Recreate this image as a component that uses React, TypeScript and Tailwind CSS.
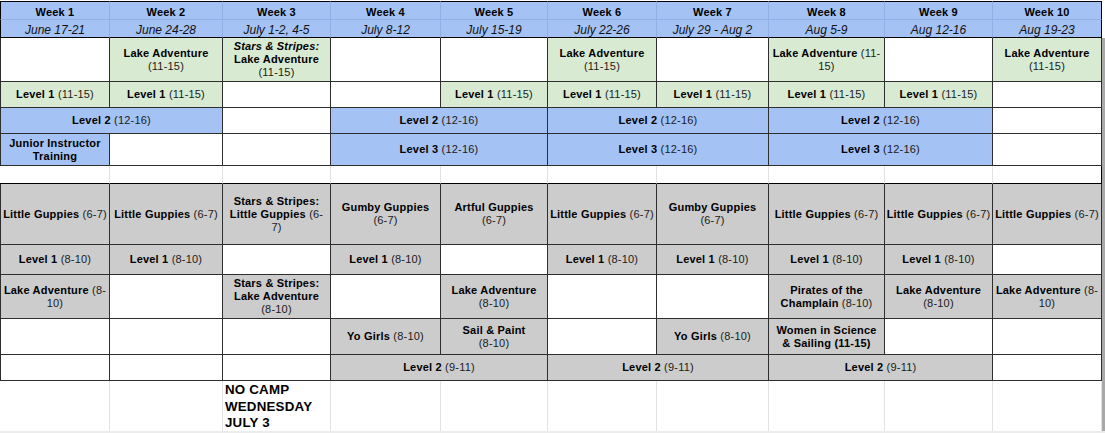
import type { ReactNode } from 'react'

// Summer sailing camp schedule, rendered like the shared Google Sheet.
type Bg = 'w' | 'g' | 'b' | 'k'
type Cell = { span?: 2; bg?: Bg; c?: ReactNode }
type Row = { h: string; kind: 'grid' | 'blank' | 'foot'; cells: Cell[] }

const BG: Record<Bg, string> = {
  w: 'bg-white',
  g: 'bg-[#d9ead3]',
  b: 'bg-[#a4c2f4]',
  k: 'bg-[#cccccc]'
}

const WEEKS = [
  ['Week 1', 'June 17-21'],
  ['Week 2', 'June 24-28'],
  ['Week 3', 'July 1-2, 4-5'],
  ['Week 4', 'July 8-12'],
  ['Week 5', 'July 15-19'],
  ['Week 6', 'July 22-26'],
  ['Week 7', 'July 29 - Aug 2'],
  ['Week 8', 'Aug 5-9'],
  ['Week 9', 'Aug 12-16'],
  ['Week 10', 'Aug 19-23']
]

function B({ children }: { children: ReactNode }): JSX.Element {
  return <span className="font-bold text-black">{children}</span>
}

const lake = (
  <>
    <B>Lake Adventure</B>
    <br />
    (11-15)
  </>
)
const lake8 = (
  <>
    <B>Lake Adventure</B>
    <br />
    (8-10)
  </>
)
const lakeSplit8 = (
  <>
    <B>Lake Adventure</B> (8-
    <br />
    10)
  </>
)
const l1 = (
  <>
    <B>Level 1</B> (11-15)
  </>
)
const l1y = (
  <>
    <B>Level 1</B> (8-10)
  </>
)
const l2 = (
  <>
    <B>Level 2</B> (12-16)
  </>
)
const l3 = (
  <>
    <B>Level 3</B> (12-16)
  </>
)
const l2y = (
  <>
    <B>Level 2</B> (9-11)
  </>
)
const guppies = (
  <>
    <B>Little Guppies</B> (6-7)
  </>
)
const gumby = (
  <>
    <B>Gumby Guppies</B>
    <br />
    (6-7)
  </>
)
const yo = (
  <>
    <B>Yo Girls</B> (8-10)
  </>
)

const blank10: Cell[] = Array.from({ length: 10 }, () => ({}))

const ROWS: Row[] = [
  {
    h: 'h-[44px]',
    kind: 'grid',
    cells: [
      {},
      { bg: 'g', c: lake },
      {
        bg: 'g',
        c: (
          <>
            <B>
              <i>Stars &amp; Stripes:</i>
            </B>
            <br />
            <B>Lake Adventure</B>
            <br />
            (11-15)
          </>
        )
      },
      {},
      {},
      { bg: 'g', c: lake },
      {},
      {
        bg: 'g',
        c: (
          <>
            <B>Lake Adventure</B> (11-
            <br />
            15)
          </>
        )
      },
      {},
      { bg: 'g', c: lake }
    ]
  },
  {
    h: 'h-[26px]',
    kind: 'grid',
    cells: [
      { bg: 'g', c: l1 },
      { bg: 'g', c: l1 },
      {},
      {},
      { bg: 'g', c: l1 },
      { bg: 'g', c: l1 },
      { bg: 'g', c: l1 },
      { bg: 'g', c: l1 },
      { bg: 'g', c: l1 },
      {}
    ]
  },
  {
    h: 'h-[26px]',
    kind: 'grid',
    cells: [
      { span: 2, bg: 'b', c: l2 },
      {},
      { span: 2, bg: 'b', c: l2 },
      { span: 2, bg: 'b', c: l2 },
      { span: 2, bg: 'b', c: l2 },
      {}
    ]
  },
  {
    h: 'h-[32px]',
    kind: 'grid',
    cells: [
      {
        bg: 'b',
        c: (
          <B>
            Junior Instructor
            <br />
            Training
          </B>
        )
      },
      {},
      {},
      { span: 2, bg: 'b', c: l3 },
      { span: 2, bg: 'b', c: l3 },
      { span: 2, bg: 'b', c: l3 },
      {}
    ]
  },
  { h: 'h-[18px]', kind: 'blank', cells: blank10 },
  {
    h: 'h-[61px]',
    kind: 'grid',
    cells: [
      { bg: 'k', c: guppies },
      { bg: 'k', c: guppies },
      {
        bg: 'k',
        c: (
          <>
            <B>Stars &amp; Stripes:</B>
            <br />
            <B>Little Guppies</B> (6-
            <br />
            7)
          </>
        )
      },
      { bg: 'k', c: gumby },
      {
        bg: 'k',
        c: (
          <>
            <B>Artful Guppies</B>
            <br />
            (6-7)
          </>
        )
      },
      { bg: 'k', c: guppies },
      { bg: 'k', c: gumby },
      { bg: 'k', c: guppies },
      { bg: 'k', c: guppies },
      { bg: 'k', c: guppies }
    ]
  },
  {
    h: 'h-[30px]',
    kind: 'grid',
    cells: [
      { bg: 'k', c: l1y },
      { bg: 'k', c: l1y },
      {},
      { bg: 'k', c: l1y },
      {},
      { bg: 'k', c: l1y },
      { bg: 'k', c: l1y },
      { bg: 'k', c: l1y },
      { bg: 'k', c: l1y },
      {}
    ]
  },
  {
    h: 'h-[44px]',
    kind: 'grid',
    cells: [
      { bg: 'k', c: lakeSplit8 },
      {},
      {
        bg: 'k',
        c: (
          <>
            <B>Stars &amp; Stripes:</B>
            <br />
            <B>Lake Adventure</B>
            <br />
            (8-10)
          </>
        )
      },
      {},
      { bg: 'k', c: lake8 },
      {},
      {},
      {
        bg: 'k',
        c: (
          <>
            <B>Pirates of the</B>
            <br />
            <B>Champlain</B> (8-10)
          </>
        )
      },
      { bg: 'k', c: lake8 },
      { bg: 'k', c: lakeSplit8 }
    ]
  },
  {
    h: 'h-[36px]',
    kind: 'grid',
    cells: [
      {},
      {},
      {},
      { bg: 'k', c: yo },
      {
        bg: 'k',
        c: (
          <>
            <B>Sail &amp; Paint</B>
            <br />
            (8-10)
          </>
        )
      },
      {},
      { bg: 'k', c: yo },
      {
        bg: 'k',
        c: (
          <B>
            Women in Science
            <br />& Sailing (11-15)
          </B>
        )
      },
      {},
      {}
    ]
  },
  {
    h: 'h-[26px]',
    kind: 'grid',
    cells: [
      {},
      {},
      {},
      { span: 2, bg: 'k', c: l2y },
      { span: 2, bg: 'k', c: l2y },
      { span: 2, bg: 'k', c: l2y },
      {}
    ]
  },
  {
    h: 'h-[50px]',
    kind: 'foot',
    cells: [
      {},
      {},
      {
        c: (
          <div className="pt-px pl-[2px] text-[13.33px] leading-[16.5px] font-bold tracking-[0.2px] text-black">
            NO CAMP
            <br />
            WEDNESDAY
            <br />
            JULY 3
          </div>
        )
      },
      {},
      {},
      {},
      {},
      {},
      {},
      {}
    ]
  }
]

function cellClass(row: Row, cell: Cell, first: boolean, last: boolean): string {
  const center = 'flex items-center justify-center text-center whitespace-nowrap tracking-[0.2px]'
  const span = cell.span === 2 ? 'col-span-2' : ''
  if (row.kind === 'grid') {
    return [
      center,
      span,
      row.h,
      BG[cell.bg ?? 'w'],
      'border-r border-b border-[#2e2e2e]',
      first ? 'border-l' : ''
    ].join(' ')
  }
  if (row.kind === 'blank') {
    return [
      center,
      row.h,
      'bg-white border-b border-b-black border-r',
      last ? 'border-r-black' : 'border-r-[#e2e2e2]'
    ].join(' ')
  }
  return [row.h, 'bg-white text-left whitespace-nowrap border-r border-r-[#e2e2e2]'].join(' ')
}

export default function App(): JSX.Element {
  return (
    <div className="w-[1105px] h-[433px] overflow-hidden bg-[#ececec] font-['Liberation_Sans',Arial,sans-serif] text-[11px] leading-[13px] text-[#1a1a1a]">
      <div className="flex bg-white pt-px">
        <div className="grid w-[1102px] grid-cols-[110px_113px_108px_110px_107px_109px_112px_116px_108px_109px]">
          {WEEKS.map(([w], i) => (
            <div
              key={w}
              className={`flex h-[19px] items-end justify-center border-t border-t-black border-b border-b-[#92b0e4] bg-[#a4c2f4] text-[11px] font-bold tracking-[0.2px] text-black ${
                i === 9 ? 'border-r border-r-black' : 'border-r border-r-[#92b0e4]'
              } ${i === 0 ? 'border-l border-l-black' : ''}`}
            >
              {w}
            </div>
          ))}
          {WEEKS.map(([w, d], i) => (
            <div
              key={w + d}
              className={`flex h-[18px] items-end justify-center border-b border-b-black bg-[#a4c2f4] text-[12px] leading-[14px] italic text-[#111] ${
                i === 9 ? 'border-r border-r-black' : 'border-r border-r-[#92b0e4]'
              } ${i === 0 ? 'border-l border-l-black' : ''}`}
            >
              {d}
            </div>
          ))}
          {ROWS.map((row, ri) =>
            row.cells.map((cell, ci) => (
              <div
                key={`${ri}-${ci}`}
                className={cellClass(row, cell, ci === 0, ci === row.cells.length - 1)}
              >
                {cell.c !== undefined && <div>{cell.c}</div>}
              </div>
            ))
          )}
        </div>
        <div className="flex w-[3px] flex-col">
          <div className="h-[37px] bg-white" />
          <div className="flex-1 bg-[#a9a9a9]" />
        </div>
      </div>
    </div>
  )
}
